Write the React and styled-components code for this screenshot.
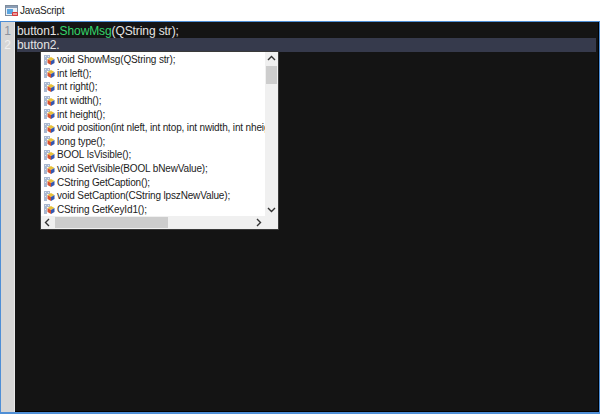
import React from "react";
import styled, { createGlobalStyle } from "styled-components";

const Global = createGlobalStyle`
  html, body { margin: 0; padding: 0; background: #fff; }
  #root { width: 600px; height: 414px; overflow: hidden; }
`;
const Window = styled.div`
  width: 600px; height: 414px; display: flex; flex-direction: column;
  font-family: "Liberation Sans", Arial, sans-serif; background: #fff;
`;
const TitleBar = styled.div`
  height: 21px; flex: none; display: flex; align-items: center; gap: 1px;
  padding: 0 0 0 4px; font-size: 10px; letter-spacing: -0.25px; color: #222; box-sizing: border-box;
`;
const Frame = styled.div`
  flex: 1; min-height: 0; display: flex; position: relative;
  border: solid #4f8fd6; border-width: 1px 1px 2px 1px; background: #141414;
`;
const Gutter = styled.div`
  width: 13px; flex: none; background: #d6d6d6; border-right: 1px solid #e8e8e8;
  padding-top: 2px; display: flex; flex-direction: column;
`;
const LineNo = styled.div`
  height: 14px; line-height: 14px; font-size: 12px; color: ${p => p.$active ? "#f0f0f0" : "#8b93a0"};
  text-align: center;
`;
const Editor = styled.div`
  flex: 1; min-width: 0; padding: 2px 2px 0 2px; border-right: 1px solid #000; border-bottom: 1px solid #000;
`;
const CodeLine = styled.div`
  height: 14px; line-height: 14px; font-size: 12px; letter-spacing: -0.1px; color: #e4e4e4;
  background: ${p => p.$active ? "#363a4c" : "transparent"}; white-space: pre;
`;
const Method = styled.span`color: #35d56a;`;
const Popup = styled.div`
  position: absolute; left: 40px; top: 30px; width: 237px; height: 177px;
  background: #fff; display: grid; grid-template-columns: 224px 13px; grid-template-rows: 164px 13px;
  box-shadow: 0 0 0 1px #3a3a3a;
`;
const List = styled.div`overflow: hidden; padding: 1px 0 0 2px;`;
const Item = styled.div`
  height: 13.6px; display: flex; align-items: center; gap: 2px; font-size: 10px; letter-spacing: -0.15px; color: #1c1c1c; white-space: nowrap;
`;
const VBar = styled.div`
  background: #f0f0f0; display: flex; flex-direction: column; align-items: center;
`;
const HBar = styled.div`
  background: #f0f0f0; display: flex; align-items: center;
`;
const Arrow = styled.div`
  width: 13px; height: 13px; flex: none; display: flex; align-items: center; justify-content: center;
`;
const VThumb = styled.div`width: 11px; height: 18px; background: #cdcdcd; margin-top: 1px;`;
const VSpace = styled.div`flex: 1;`;
const HThumb = styled.div`width: 113px; height: 11px; background: #cdcdcd; margin-left: 1px;`;
const Corner = styled.div`background: #f0f0f0;`;

const Chevron = ({ d }) => (
  <svg width="9" height="9" viewBox="0 0 9 9" fill="none" stroke="#333" strokeWidth="1.4"><path d={d} /></svg>
);
const MemberIcon = () => (
  <svg width="12" height="12" viewBox="0 0 12 12" style={{ flex: "none" }}>
    <rect x="1" y="1" width="6" height="3" fill="#a9b8d0" />
    <rect x="1" y="4" width="3" height="7" fill="#a9b8d0" />
    <rect x="2" y="2" width="1" height="1" fill="#e6ebf3" />
    <rect x="5" y="2" width="1" height="1" fill="#e6ebf3" />
    <rect x="2" y="6" width="1" height="1" fill="#e6ebf3" />
    <path d="M8 3l3.5 2-3.5 2-3.5-2z" fill="#e8c23a" />
    <path d="M4.500 5L8 7v4L4.500 9z" fill="#d9522e" />
    <path d="M8 7l3.500-2v4L8 11z" fill="#3557b0" />
  </svg>
);
const AppIcon = () => (
  <svg width="15" height="14" viewBox="0 0 15 14">
    <rect x="1.500" y="1.500" width="12" height="10" fill="#e9eff6" stroke="#7f8c9c" />
    <rect x="2" y="2" width="11" height="2" fill="#8a9db5" />
    <rect x="3" y="5" width="6" height="5" fill="#5aa5e0" />
    <rect x="8" y="8" width="6" height="4" rx="1" fill="#d8383a" />
    <path d="M9 10h4" stroke="#fff" />
  </svg>
);

const items = [
  "void ShowMsg(QString str);", "int left();", "int right();", "int width();", "int height();",
  "void position(int nleft, int ntop, int nwidth, int nheight);", "long type();", "BOOL IsVisible();",
  "void SetVisible(BOOL bNewValue);", "CString GetCaption();", "void SetCaption(CString lpszNewValue);", "CString GetKeyId1();",
];

export default function App() {
  return (
    <Window>
      <Global />
      <TitleBar><AppIcon />JavaScript</TitleBar>
      <Frame>
        <Gutter>
          <LineNo>1</LineNo>
          <LineNo $active>2</LineNo>
        </Gutter>
        <Editor>
          <CodeLine>button1.<Method>ShowMsg</Method>(QString str);</CodeLine>
          <CodeLine $active>button2.</CodeLine>
        </Editor>
        <Popup>
          <List>
            {items.map(t => <Item key={t}><MemberIcon />{t}</Item>)}
          </List>
          <VBar>
            <Arrow><Chevron d="M1 6l3.5-3.5L8 6" /></Arrow>
            <VThumb />
            <VSpace />
            <Arrow><Chevron d="M1 3l3.5 3.5L8 3" /></Arrow>
          </VBar>
          <HBar>
            <Arrow><Chevron d="M6 1L2.5 4.5 6 8" /></Arrow>
            <HThumb />
            <VSpace />
            <Arrow><Chevron d="M3 1l3.5 3.5L3 8" /></Arrow>
          </HBar>
          <Corner />
        </Popup>
      </Frame>
    </Window>
  );
}
